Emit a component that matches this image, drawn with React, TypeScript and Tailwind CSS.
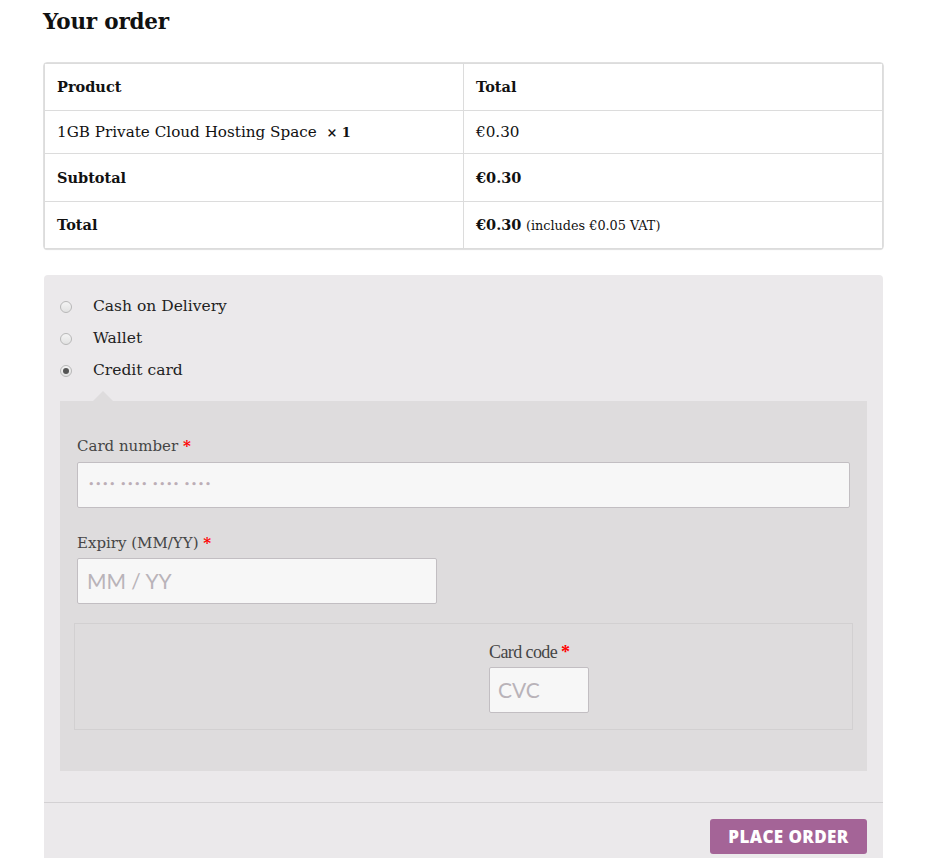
export default function App() {
  const serif = { fontFamily: '"DejaVu Serif", "Liberation Serif", serif' };
  return (
    <div className="w-[929px] h-[858px] overflow-hidden bg-white text-[#333]" style={serif}>
      <div className="pl-[44px] pr-[46px]">
        <h2 className="pt-[6px] h-[63px] text-[21.5px] font-bold text-[#111] tracking-[-0.2px] -ml-[1px]">Your order</h2>

        <table className="w-full border-collapse text-[14.5px] text-[#111] shadow-[0_1px_1px_rgba(0,0,0,0.12)] rounded-[3px] outline outline-[#e0e0e0]">
          <tbody>
            <tr className="h-[47px]">
              <th className="w-[419px] text-left font-bold px-3 border border-[#dcdcdc]">Product</th>
              <th className="text-left font-bold px-3 border border-[#dcdcdc]">Total</th>
            </tr>
            <tr className="h-[43px]">
              <td className="px-3 border border-[#dcdcdc] text-[15.2px]">
                1GB Private Cloud Hosting Space&nbsp; <span className="font-bold text-[13px]">× 1</span>
              </td>
              <td className="px-3 border border-[#dcdcdc] text-[15.2px]">€0.30</td>
            </tr>
            <tr className="h-[48px]">
              <td className="px-3 border border-[#dcdcdc] font-bold">Subtotal</td>
              <td className="px-3 border border-[#dcdcdc] font-bold">€0.30</td>
            </tr>
            <tr className="h-[47px]">
              <td className="px-3 border border-[#dcdcdc] font-bold">Total</td>
              <td className="px-3 border border-[#dcdcdc]">
                <span className="font-bold">€0.30</span>{" "}
                <span className="text-[12.8px]">(includes €0.05 VAT)</span>
              </td>
            </tr>
          </tbody>
        </table>

        <div className="mt-[26px] bg-[#ebe9eb] rounded-t-[4px]">
          <div className="pt-[16px] px-[16px]">
            {[
              { label: "Cash on Delivery", checked: false },
              { label: "Wallet", checked: false },
              { label: "Credit card", checked: true },
            ].map((m) => (
              <div key={m.label} className="flex items-center h-[32px] text-[15.5px] text-[#222]">
                <span className="w-[12px] h-[12px] rounded-full border border-[#b8b8b8] bg-gradient-to-b from-[#f4f4f4] to-[#e2e2e2] flex items-center justify-center">
                  {m.checked && <span className="w-[6px] h-[6px] rounded-full bg-[#555]" />}
                </span>
                <span className="ml-[21px]">{m.label}</span>
              </div>
            ))}

            <div className="relative mt-[14px] bg-[#dedcdd] px-[17px] pt-[34px] pb-[41px]">
              <div className="absolute -top-[10px] left-[33px] w-0 h-0 border-l-[10px] border-r-[10px] border-b-[10px] border-l-transparent border-r-transparent border-b-[#dedcdd]" />

              <label className="block text-[15px] text-[#454545] h-[27px]">
                Card number <span className="text-[#f00] font-bold">*</span>
              </label>
              <div className="h-[46px] bg-[#f7f7f7] border border-[#c2bec2] rounded-[2px] flex items-center px-[10px] text-[11px] tracking-[0.5px] text-[#bcaeb6]">
                •••• •••• •••• ••••
              </div>

              <label className="block mt-[27px] text-[15px] text-[#454545] h-[16px] leading-[16px] mb-[7px]">
                Expiry (MM/YY) <span className="text-[#f00] font-bold">*</span>
              </label>
              <div
                className="w-[360px] h-[46px] bg-[#f7f7f7] border border-[#c2bec2] rounded-[2px] flex items-center px-[9px] text-[21px] text-[#b9b3b9]"
                style={{ fontFamily: 'Lato, "Open Sans", sans-serif' }}
              >
                MM / YY
              </div>

              <div className="-mx-[3px] mt-[19px] h-[107px] border border-[#d2d0d1] pl-[414px] pt-[15px]">
                <label
                  className="block text-[#454545] h-[28px] tracking-[-0.6px]"
                  style={{ fontFamily: '"Liberation Serif", serif', fontSize: 18 }}
                >
                  Card code <span className="text-[#f00] font-bold">*</span>
                </label>
                <div
                  className="w-[100px] h-[46px] bg-[#f7f7f7] border border-[#c2bec2] rounded-[2px] flex items-center px-[8px] text-[21px] text-[#b9b3b9]"
                  style={{ fontFamily: 'Lato, "Open Sans", sans-serif' }}
                >
                  CVC
                </div>
              </div>
            </div>
          </div>

          <div className="mt-[31px] border-t border-[#d3d1d3] h-[56px] flex justify-end items-start pt-[16px] pr-[16px]">
            <button
              className="h-[35px] w-[157px] bg-[#a46497] rounded-[3px] text-white font-extrabold text-[17px] tracking-[0.4px]"
              style={{ fontFamily: '"Open Sans", Inter, sans-serif' }}
            >
              PLACE ORDER
            </button>
          </div>
        </div>
      </div>
    </div>
  );
}
